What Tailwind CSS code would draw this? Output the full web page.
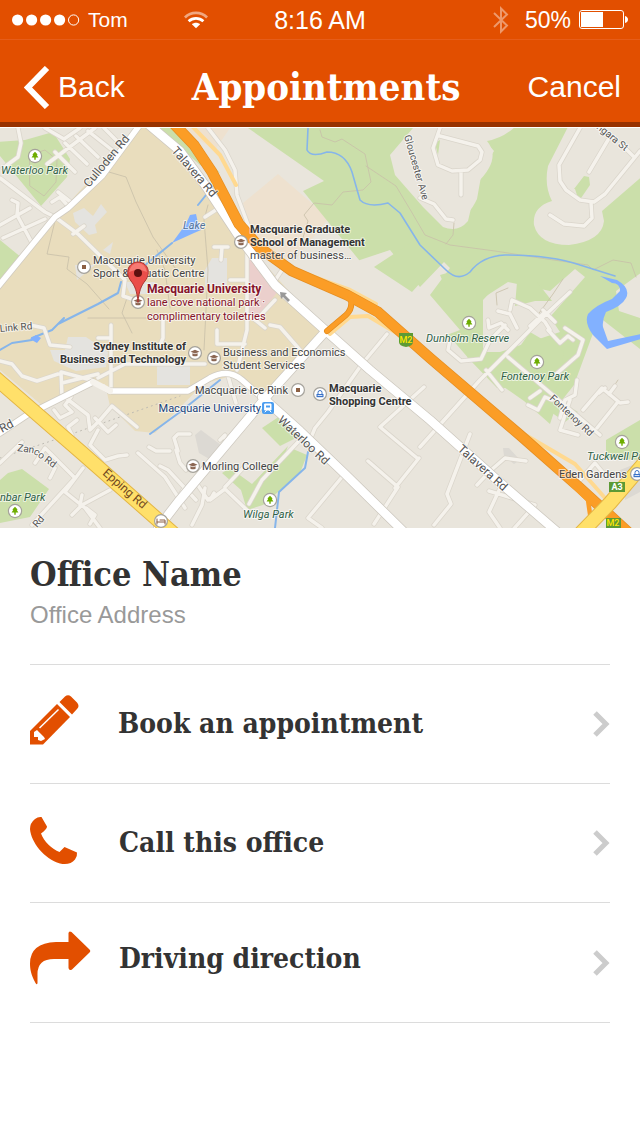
<!DOCTYPE html>
<html lang="en">
<head>
<meta charset="utf-8">
<meta name="viewport" content="width=device-width, initial-scale=1">
<title>Appointments</title>
<script src="https://cdn.jsdelivr.net/npm/@tailwindcss/browser@4"></script>
</head>
<body class="min-h-screen bg-white font-['Liberation_Sans',Arial,sans-serif] text-[#333333]">

<header class="border-b-5 border-[#983200] bg-[#e24f00] text-white">
  <div class="grid h-10 grid-cols-[1fr_auto_1fr] items-center border-b border-[#e65d1a] pr-3 pl-3">
    <div class="flex items-center">
      <svg class="h-3 w-[68px]" viewBox="0 0 68 12" fill="#fff" aria-label="Signal strength">
        <circle cx="5.6" cy="6" r="5.6"/><circle cx="19.6" cy="6" r="5.6"/><circle cx="33.6" cy="6" r="5.6"/><circle cx="47.6" cy="6" r="5.6"/><circle cx="61.6" cy="6" r="5.1" fill="none" stroke="#fff"/>
      </svg>
      <span class="ml-2 text-[21px] leading-6">Tom</span>
      <svg class="ml-14 h-[18px] w-[24px]" viewBox="0 0 26 18" fill="none" stroke="#fff" stroke-width="3" aria-label="Wi-Fi">
        <path d="M1 6.2C7.700-.2 18.300-.2 25 6.200" opacity=".5"/><path d="M5 10.300c4.600-4.200 11.400-4.200 16 0"/><path d="M8.500 13.600c2.600-2.200 6.400-2.200 9 0L13 18z" fill="#fff" stroke="none"/>
      </svg>
    </div>
    <span class="text-[25px] leading-8">8:16 AM</span>
    <div class="flex items-center justify-end">
      <svg class="mr-4 h-7 w-4" viewBox="0 0 16 28" fill="none" stroke="#fff" stroke-width="2" opacity=".42" aria-label="Bluetooth"><path d="M1 7l13 12.500-6 6V2.500l6 6L1 21"/></svg>
      <span class="mr-2 text-[23px] leading-8">50%</span>
      <svg class="h-5 w-[49px]" viewBox="0 0 49 20" aria-label="Battery at 50%"><rect x=".5" y=".5" width="44" height="18" rx="2.500" fill="none" stroke="#fff"/><path d="M2 2h22v15H2zM46 6q3 1 3 3.500T46 13z" fill="#fff"/></svg>
    </div>
  </div>
  <nav class="flex h-[82px] items-center justify-between pt-3 pr-[19px] pl-6" aria-label="Page">
    <button type="button" class="flex items-center gap-2 text-3xl leading-9">
      <svg class="h-[43px] w-[26px]" viewBox="0 0 26 43" fill="none" stroke="#fff" stroke-width="6" aria-hidden="true"><path d="M23 2L4 21.500 23 41"/></svg>
      Back
    </button>
    <h1 class="font-['Roboto_Slab','DejaVu_Serif_Condensed','DejaVu_Serif',serif] text-[38px] leading-10 font-bold">Appointments</h1>
    <button type="button" class="text-3xl leading-9">Cancel</button>
  </nav>
</header>

<main>
  <svg class="mt-px block w-full" viewBox="0 128 640 400" role="img" aria-label="Map around Macquarie University" font-family="Roboto, sans-serif" stroke-linejoin="round" stroke-linecap="round">
    <defs>
      <g id="tree"><circle r="7.200" fill="#a5a29b"/><circle r="6" fill="#fff"/><path d="M0-4.200L2.600-1.500 1.800-1 3.400 1.400H.7V3.700H-.7V1.400H-3.400L-1.800-1-2.600-1.500z" fill="#6ead00"/></g>
      <g id="dot"><circle r="7" fill="#a5a29b"/><circle r="5.800" fill="#fff"/></g>
      <g id="cap"><use href="#dot"/><path d="M-4.500-1.300L0-3.200 4.500-1.300 0 .6zM-2.600.3L0 1.300 2.600.3V2.700Q0 4-2.600 2.700z" fill="#8c6753"/></g>
      <g id="poi"><use href="#dot"/><path d="M-2-2h4v4h-4z" fill="#8c6044"/></g>
      <g id="bag"><use href="#dot"/><path d="M-3.500 0h7v3.200h-7z" fill="#3b73c8"/><path d="M-2 0v-1.500a2 2 0 014 0V0" fill="none" stroke="#3b73c8"/><path d="M-2 1.500h4" stroke="#fff" stroke-width=".8"/></g>
      <path id="minor" d="M0 178L45 212 55 217M18 128L21 143 18 157 3 168M45 128L64 139 80 128M47 164L95 128M55 152L75 172M65 143L87 164M76 136L98 157M88 131L112 150M104 128L116 140M52 202L60 197 68 206M58 192L72 203M0 225L30 208M3 238L45 219M12 200L18 203 17 215 32 243M55 217L78 234 125 280M73 234L84 226M125 280L123 296 135 300M0 361L12 364 22 376 37 381 58 374M30 325L44 328 50 345 70 347M62 397L61 372 91 380 108 391 155 391M62 383L98 374M98 378L125 364H205M111 325V390M98 338H111M163 320V338L160 345M62 395L88 415 90 430 100 420 112 406 137 427M71 397L65 405 72 412 60 418 54 410M95 418L108 432 116 425M98 430L90 445 105 460 118 456 127 455M72 435L68 427 77 420M0 463L22 442M35 463L45 448 75 478 32 525M50 478L55 468M83 468L65 492 85 508 100 528M80 505L82 495M72 515L82 505 110 490M86 508L95 515 90 524M138 453L165 477 185 508M149 447L156 451 170 451M178 451L174 438 178 434 190 434M160 466L168 470 196 500M176 450L180 463 186 470M183 490L177 500M197 484L208 500 213 496M205 488L202 505 192 525M208 128L225 150 235 170 237 195 250 230M205 217L222 206M214 247H228M222 247L221 260M247 250V330L237 370M230 280H245M272 285L282 270M258 318L275 300M249 315L265 328M217 330V344H245M270 325L280 327 300 350M227 372L232 390 236 403M220 440L225 435 226 446M210 500L225 489 249 512M225 487L245 466M249 504L262 480 298 442M210 500L214 493M342 477L308 518 322 528M310 440L315 428 328 412 362 364 387 334M368 461L398 487 395 488 419 458M398 487L374 524M417 458L380 427 424 387M420 447L480 380 540 320 570 292M470 434L447 494 451 504 434 525M477 485L490 471 505 458 526 461M489 491L535 505 502 542M502 484L489 512 500 528M508 357L600 435M555 375L578 355 583 340 565 328M548 330L560 343 568 336 573 340M528 405L538 410 545 397 552 400M530 398L540 391M560 418L565 400 575 395 577 380M570 400L560 430 578 435M583 410L602 388 620 403 628 402M597 428L617 403M609 394L615 386M599 393L605 388M450 340L448 350 461 361 481 359 490 340 505 325M486 370L502 390M510 310L512 300 530 308 545 322 550 330M488 320L489 328 501 323 508 330M498 311L510 314 517 328M530 326L545 312M543 310L555 322M580 480L595 463 605 475M440 128L433 148 438 165 452 171 468 170 480 160 482 152 478 146 440 136M461 171V195M420 198L434 204 446 219 453 220M580 128L559 165 560 181 566 190 580 200 594 202 605 194 640 151M589 172L608 140M550 215L564 224 584 226 592 218 591 203M624 147L634 157"/>
    </defs>

    <!-- Land -->
    <path fill="#e9e5dc" d="M0 128h640v400H0z"/>
    <path fill="#cbdfaa" d="M25 140l28-8 17 27-3 18-26 29-41-50-2-14zM0 240l22 18-22 22zM158 128h20l42 45-20-8z"/>
    <path fill="#e9ddbd" d="M137 128h14l70 73 26 43 80 90-57 63-39-21-28 8-48 49-20-2-25-25-5-22H96L44 407 0 370v-85l55-67z"/>
    <path fill="#eee1cf" d="M278 174l51 44-35 43-40-20-11-38zM210 128h20l-15 22-35-22z"/>
    <path fill="#cbdfaa" d="M248 128h165l-23 27 5 20 28 32 20 20q15 6 25-6l7-30 2-8q25-24 10-42 18-3 32-18h51l-22 43q-4 20 4 35-20 6-18 24 5 20 35 20 33-4 35-24l-2-10 44-38v96l-30 22 3 20 21 7v31l-41-32-25 68-19 24-5 15-26-23-33-23 36-40 18 26-15 24h-33l-27-28-26-30-19 8-53-62-69-85 21-10z"/>
    <path fill="#e9e5dc" d="M439 128q-22 15-19 35 5 30 24 46 19 20 33-10l5-28 12-20-22-25zM420 287l24-25 6 6-20 27 30 35-40 15-55-40-35-35 60-20zM483 298l25-16 42 9 25-22 10 8-35 40 10 15-60 20h-17z"/>
    <path fill="#cbdfaa" d="M415 240l24 22-27 30-38-25zM517 282h20l15 19h-17l-20 5zM530 332l34 20-5 32-8 11-37-40zM465 328h15l3 26-15 5-3-10zM435 143l5-3-2 15zM574 189l10-13 5 1 1 8-11 16-4-12zM548 410l10-10 20 12-13 10zM606 440l34-20v40l-34-2zM8 473l14-4 27 20-19 28-30 6v-43zM262 428l18-12 20 20-20 10zM285 454l8-5 14 6-7 18-37 32-16 5-6-20-19-17 8-5 22 16 36-38z"/>
    <path fill="#cbdfaa" d="M440 275l43-12 17 19-17 18v28h-20z"/>
    <path fill="#e4e3df" d="M73 213l11-5 9 8 8-12 6 8-12 13 2 8-8 2-14-13zM125 282h30v12h-25zM50 350h15l3-13h18l22 15-2 15-30 4-22-10zM157 365h33v20h-33zM205 270l7-12h15v28h-22zM103 250l10-8-3 12zM75 265h20l-18 15z"/>
    <path fill="#ebcfcc" d="M247 250l32 40-22 27h-9z"/>
    <path fill="#dcd9d3" d="M503 448l6 0 11 12-6 4-10-8zM620 470l20-8v30l-15 8zM195 435l6-5 20 15-10 15-12-7z"/>

    <!-- Footpaths -->
    <g fill="none" stroke="#c8bfa8" stroke-width=".8">
      <path d="M102 170l24 7 10 25 17 35 25 35M55 221l-8 33 22 3-2 12 20 15 22 25M157 250l8 20 5 38M88 318h80M208 205l-4 15 4 50-4 80M127 298l-5 15 10 20M30 155l15-5 12 10-1 22-12 14-14-10zM320 130l2 7 13 5 7-3 23 15 6 28-8 8-20 2-11 13-18-2-10 12 4 6-6 20M366 166l30 20 15 25 14 24 25 10 45 6 45 7 48 7 5 5 20-10 18 3 5 14M454 223l-1 12-7 9M497 305l-1-12 12-5M537 316l16-22 10-15M618 380l-8 12"/>
    </g>
    <path fill="none" stroke="#bdbab2" stroke-dasharray="1 4" d="M0 458l60-20 120-42"/>

    <!-- Water -->
    <g fill="none" stroke="#86b5ea" stroke-width="2">
      <path d="M308 128l-1 22q4 8 20 2 18 0 25 20l8 28q8 8 28 3l12 10 20 32 26 25q12 12 24 2 12-16 35-17 46 0 75 10l35 11" stroke-width="1.600"/>
      <path d="M172 243l-33 27M198 205l16-20M121 282l-3 11-20 11-40 20M0 350l12-7 20-3M32 338l20-8 12-12M220 380l-40 32-30 22M308 452l-3 16-26 24-4 36"/>
    </g>
    <path fill="#82b1ff" d="M172 243l14-19 4-9 6-1 2 9 3 7-7 3zM30 339l6-4 5 3-4 5zM600 276l17 4q14 8 9 18-4 8-20 14-4 8-3 15l5 14 33-7v5l-34 10-14-14q-9-12-5-21 8-9 24-15l8-8q0-8-8-8z"/>

    <!-- Minor roads -->
    <g fill="none"><use href="#minor" stroke="#dad5cb" stroke-width="5"/><use href="#minor" stroke="#f5f2ec" stroke-width="3.500"/></g>

    <!-- Main roads -->
    <g fill="none">
      <path d="M139 126L102 176 68 208 55 217-4 289M0 433L27 415 93 382M110 391L188 391 210 378Q228 368 242 380L268 403" stroke="#d0cbc1" stroke-width="7"/>
      <path d="M139 126L102 176 68 208 55 217-4 289M0 433L27 415 93 382M110 391L188 391 210 378Q228 368 242 380L268 403" stroke="#fff" stroke-width="5.500"/>
      <path d="M93 382l17 9" stroke="#f5f2ec" stroke-width="6"/>
      <path d="M148 124L180 151 205 185 240 238 275 285 325 330 370 370 430 420 505 487 562 536M158 528L178 502 210 464 268 395 325 332M262 397L300 431 345 474 408 536" stroke="#cdc8bf" stroke-width="10"/>
      <path d="M148 124L180 151 205 185 240 238 275 285 325 330 370 370 430 420 505 487 562 536M158 528L178 502 210 464 268 395 325 332M262 397L300 431 345 474 408 536" stroke="#fff" stroke-width="8.500"/>
      <path d="M190 124L220 155 236 185M275 262L300 272 350 290 376 304M517 430L575 464 605 498M330 334L350 317 368 316 400 335" stroke="#ffd990" stroke-width="4"/>
      <path d="M174 124L194 145 212 172 239 224 260 248 292 271 347 295 378 312 430 358 520 435 580 488 628 532M350 296Q354 308 346 315L327 331" stroke="#e38a1c" stroke-width="6"/>
      <path d="M174 124L194 145 212 172 239 224 260 248 292 271 347 295 378 312 430 358 520 435 580 488 628 532" stroke="#e58e22" stroke-width="11"/>
      <path d="M174 124L194 145 212 172 239 224 260 248 292 271 347 295 378 312 430 358 520 435 580 488 628 532" stroke="#fb9d26" stroke-width="9.500"/>
      <path d="M350 296Q354 308 346 315L327 331M548 461L588 500 592 528" stroke="#fb9d26" stroke-width="4.500"/>
      <path d="M-8 375L82 453 175 535M646 461L610 503 580 534" stroke="#e3b545" stroke-width="15"/>
      <path d="M-8 375L82 453 175 535M646 461L610 503 580 534" stroke="#ffe06a" stroke-width="13"/>
    </g>
    <path d="M280 292l7 1-2 2 5 5-2 2-5-5-2 2z" fill="#999"/>

    <!-- Markers -->
    <use href="#tree" x="35" y="156"/><use href="#tree" x="469" y="323"/><use href="#tree" x="537" y="362"/><use href="#tree" x="622" y="442"/><use href="#tree" x="15" y="511"/><use href="#tree" x="270" y="500"/>
    <use href="#poi" x="84" y="267"/><use href="#poi" x="298" y="390"/>
    <use href="#cap" x="241" y="242"/><use href="#cap" x="138" y="302"/><use href="#cap" x="195" y="353"/><use href="#cap" x="214" y="358"/><use href="#cap" x="193" y="466"/>
    <use href="#bag" x="320" y="394"/><use href="#bag" x="637" y="474"/>
    <use href="#dot" x="161" y="521"/><path d="M157 519v5m0-2h8m0 2v-4h-5" fill="none" stroke="#8c6044"/>
    <rect x="262" y="402" width="12" height="12" rx="2" fill="#4a9df0"/><path d="M265 404h6v6h-6zM265 412l1.500-1.500M271 412l-1.500-1.500" fill="#fff" stroke="#fff"/><path d="M266 405.500h4v2h-4z" fill="#4a9df0"/>
    <g font-size="9" font-weight="500" text-anchor="middle"><path d="M399 333h14v9q0 4-7 5-7-1-7-5z" fill="#5d9a35"/><text x="406" y="343" fill="#ffe600">M2</text><path d="M609 482h16v10h-16z" fill="#5d9a35"/><text x="617" y="490" fill="#fff" font-weight="700">A3</text><path d="M606 518h15v10h-15z" fill="#5d9a35"/><text x="613" y="526" fill="#ffe600">M2</text></g>

    <!-- Labels -->
    <g font-size="11" fill="#444" stroke="#fff" stroke-opacity=".65" stroke-width="2" paint-order="stroke">
      <g fill="#2f6147" font-style="italic"><text x="1" y="174">Waterloo Park</text><text x="426" y="342">Dunholm Reserve</text><text x="501" y="380">Fontenoy Park</text><text x="587" y="460">Tuckwell Park</text><text x="-13" y="501">Dunbar Park</text><text x="243" y="518">Wilga Park</text></g>
      <text x="183" y="229" fill="#52739b" font-style="italic">Lake</text>
      <text x="93" y="264">Macquarie University</text><text x="93" y="277">Sport &amp; Aquatic Centre</text>
      <g font-weight="700" fill="#333"><text x="250" y="233">Macquarie Graduate</text><text x="250" y="246">School of Management</text><text x="186" y="350" text-anchor="end">Sydney Institute of</text><text x="186" y="363" text-anchor="end">Business and Technology</text><text x="329" y="392">Macquarie</text><text x="329" y="405">Shopping Centre</text></g>
      <text x="250" y="259">master of business…</text>
      <g fill="#85132a"><text x="147" y="293" font-weight="700" font-size="12">Macquarie University</text><text x="147" y="306">lane cove national park ·</text><text x="147" y="320">complimentary toiletries</text></g>
      <text x="223" y="356">Business and Economics</text><text x="223" y="369">Student Services</text>
      <text x="288" y="394" text-anchor="end">Macquarie Ice Rink</text>
      <text x="261" y="412" text-anchor="end" fill="#20437c">Macquarie University</text>
      <text x="202" y="470">Morling College</text><text x="559" y="478">Eden Gardens</text>
      <g fill="#555">
        <text transform="translate(89 188) rotate(-50)" font-size="12">Culloden Rd</text>
        <text transform="translate(171 151) rotate(49)" font-size="12">Talavera Rd</text>
        <text transform="translate(277 421) rotate(43)" font-size="12">Waterloo Rd</text>
        <text transform="translate(457 450) rotate(42)" font-size="12">Talavera Rd</text>
        <text transform="translate(102 474) rotate(41)" font-size="12" fill="#72491e" stroke="none">Epping Rd</text>
        <text transform="translate(404 136) rotate(74)" font-size="10">Gloucester Ave</text>
        <text transform="translate(549 399) rotate(43)" font-size="10">Fontenoy Rd</text>
        <text transform="translate(596 128) rotate(39)" font-size="10">ngara St</text>
        <text transform="translate(0 332) rotate(-5)" font-size="10">Link Rd</text>
        <text transform="translate(2 433) rotate(-28)" font-size="12">Rd</text>
        <text transform="translate(17 451) rotate(8)" font-size="10">Zan</text><text transform="translate(33 453) rotate(37)" font-size="10">co Rd</text>
        <text transform="translate(37 528) rotate(-48)" font-size="10">Rd</text>
      </g>
    </g>

    <!-- Selected place -->
    <path d="M138 302c-1-11-3-16-7-21-7-9-2-19 7-19s14 10 7 19c-4 5-6 10-7 21z" fill="#ea4e4a" stroke="#a93430" stroke-width="1"/>
    <path d="M129 272q2-9 9-9t9 9q-9-4-18 0z" fill="#f77a73"/>
    <circle cx="138" cy="273" r="4" fill="#5e100f"/>
  </svg>

  <section class="px-[30px]">
    <div class="h-[137px] border-b border-[#dcdcdc] pt-6">
      <h2 class="font-['Roboto_Slab','DejaVu_Serif_Condensed','DejaVu_Serif',serif] text-[34px] leading-11 font-bold">Office Name</h2>
      <p class="mt-1 text-2xl leading-[30px] text-[#999999]">Office Address</p>
    </div>
    <ul class="font-['Roboto_Slab','DejaVu_Serif_Condensed','DejaVu_Serif',serif] text-[28px] leading-9 font-bold">
      <li class="border-b border-[#dcdcdc]">
        <a href="#book" class="flex h-[118px] items-center">
          <svg class="mr-[27px] h-[58px] w-[61px]" viewBox="0 0 61 58" aria-hidden="true"><path d="M0 36L27 9 40 22 13 49.500H0z" fill="#e24f00"/><path d="M29.500 7L35 1.600Q38-1 41 1.500L47 7.500Q50 11 47 14L42 19.500z" fill="#e24f00"/><path d="M9.500 33L28.500 14.500" stroke="#fff" stroke-width="1.500"/><path d="M7 35l7 7 1 2-4 2-3-1V42H4V37z" fill="#fff"/></svg>
          <span class="grow">Book an appointment</span>
          <svg class="h-[26px] w-[17px]" viewBox="0 0 17 26" fill="none" stroke="#ccc" stroke-width="5" aria-hidden="true"><path d="M2 2L13 13 2 24"/></svg>
        </a>
      </li>
      <li class="border-b border-[#dcdcdc]">
        <a href="#call" class="flex h-[118px] items-center">
          <svg class="mr-7 h-[55px] w-[61px]" viewBox="0 0 61 55" aria-hidden="true"><path d="M5 3Q8 .500 11.500 1L17 10.500Q17 13 11 17.500C14 26 22 33 29.500 36L34.500 31 47 36.500Q47.500 40 45 43.500 40 49.500 30 47.500C14 43 1 26 0 13Q0 7 5 3z" fill="#e24f00"/></svg>
          <span class="grow">Call this office</span>
          <svg class="h-[26px] w-[17px]" viewBox="0 0 17 26" fill="none" stroke="#ccc" stroke-width="5" aria-hidden="true"><path d="M2 2L13 13 2 24"/></svg>
        </a>
      </li>
      <li class="border-b border-[#dcdcdc]">
        <a href="#directions" class="flex h-[119px] items-center">
          <span class="flex grow items-center pb-2">
            <svg class="mr-7 h-[56px] w-[61px]" viewBox="0 0 61 56" aria-hidden="true"><path d="M38.500 11V2Q39-.500 41.500 1L59.500 18.500Q61 20 59.500 21.500L42 38.500Q39 40 38.500 37V28H24Q7 28 7.500 44V52Q7 54.500 5.500 52C1 44 0 38 0 32.500Q0 12 26 11z" fill="#e24f00"/></svg>
            <span>Driving direction</span>
          </span>
          <svg class="h-[26px] w-[17px]" viewBox="0 0 17 26" fill="none" stroke="#ccc" stroke-width="5" aria-hidden="true"><path d="M2 2L13 13 2 24"/></svg>
        </a>
      </li>
    </ul>
  </section>
</main>
</body>
</html>
